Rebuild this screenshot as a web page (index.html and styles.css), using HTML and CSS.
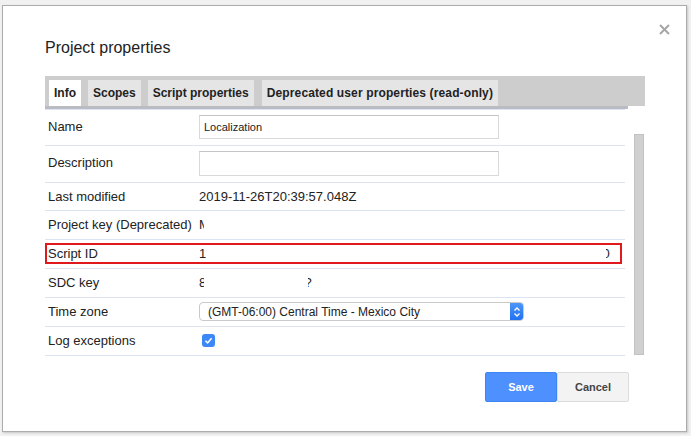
FILE: index.html
```html
<!DOCTYPE html>
<html>
<head>
<meta charset="utf-8">
<title>Project properties</title>
<link rel="stylesheet" href="styles.css">
</head>
<body>
<div class="dialog">
  <div class="close" aria-label="Close">
    <svg width="11" height="11" viewBox="0 0 11 11"><path d="M1 1 L10 10 M10 1 L1 10" stroke="#a6a6a6" stroke-width="2" fill="none"/></svg>
  </div>
  <h1 class="title">Project properties</h1>
  <div class="tabs">
    <span class="tab active">Info</span>
    <span class="tab">Scopes</span>
    <span class="tab">Script properties</span>
    <span class="tab tab-wide">Deprecated user properties (read-only)</span>
  </div>
  <div class="panel">
    <div class="table">
      <div class="row row-name">
        <div class="label">Name</div>
        <div class="value"><div class="input">Localization</div></div>
      </div>
      <div class="row row-desc">
        <div class="label label-up">Description</div>
        <div class="value"><div class="input input-desc"></div></div>
      </div>
      <div class="row row-short">
        <div class="label">Last modified</div>
        <div class="value">2019-11-26T20:39:57.048Z</div>
      </div>
      <div class="row">
        <div class="label">Project key (Deprecated)</div>
        <div class="value"><span class="frag"><span>M</span></span></div>
      </div>
      <div class="row">
        <div class="box">
          <div class="label label-box">Script ID</div>
          <div class="value value-split"><span>1</span><span class="frag frag-right"><span>0</span></span></div>
        </div>
      </div>
      <div class="row">
        <div class="label">SDC key</div>
        <div class="value value-sdc"><span class="frag"><span>8</span></span><span class="frag frag-right"><span>?</span></span></div>
      </div>
      <div class="row">
        <div class="label">Time zone</div>
        <div class="value">
          <div class="select">
            <span class="select-text">(GMT-06:00) Central Time - Mexico City</span>
            <span class="select-arrow">
              <svg width="8" height="12" viewBox="0 0 8 12"><path d="M1.5 4.5 L4 2 L6.5 4.5 M1.5 7.5 L4 10 L6.5 7.5" stroke="#fff" stroke-width="1.3" fill="none"/></svg>
            </span>
          </div>
        </div>
      </div>
      <div class="row">
        <div class="label">Log exceptions</div>
        <div class="value">
          <span class="checkbox">
            <svg width="13" height="13" viewBox="0 0 13 13"><path d="M3.5 6.8 L5.6 8.9 L9.6 4.3" stroke="#fff" stroke-width="1.6" fill="none"/></svg>
          </span>
        </div>
      </div>
    </div>
    <div class="scrollbar"></div>
  </div>
  <div class="footer">
    <button class="btn btn-save">Save</button>
    <button class="btn btn-cancel">Cancel</button>
  </div>
</div>
</body>
</html>
```
FILE: styles.css
```css
html, body {
  margin: 0;
  padding: 0;
}
body {
  background: #f1f1f1;
  font-family: "Liberation Sans", Arial, sans-serif;
  color: #222;
  width: 691px;
  height: 436px;
  overflow: hidden;
}
.dialog {
  position: relative;
  box-sizing: border-box;
  margin: 5px 0 0 2px;
  width: 685px;
  height: 427px;
  background: #fff;
  border: 1px solid #acacac;
  box-shadow: 1px 1px 2px rgba(0,0,0,0.18);
  padding: 32px 0 0 42px;
}
.close {
  position: absolute;
  top: 18px;
  right: 16px;
  width: 11px;
  height: 11px;
  line-height: 0;
}
.title {
  margin: 0;
  font-size: 16px;
  line-height: 20px;
  font-weight: normal;
  color: #222;
}
.tabs {
  margin-top: 18px;
  box-sizing: border-box;
  width: 600px;
  height: 30px;
  background: #cdcdcd;
  padding: 4px 4px 0;
  display: flex;
  gap: 7px;
}
.tab {
  height: 26px;
  line-height: 27px;
  padding: 0 5px;
  background: #e5e5e5;
  font-size: 12px;
  font-weight: bold;
  color: #222;
  white-space: nowrap;
}
.tab-wide {
  margin-left: 1px;
  letter-spacing: 0.13px;
}
.tab.active {
  background: #fff;
}
.panel {
  display: flex;
  align-items: flex-start;
  width: 600px;
}
.table {
  width: 583px;
  border-top: 3px solid #b9bcc3;
}
.row {
  box-sizing: border-box;
  width: 580px;
  height: 29px;
  padding-bottom: 1px;
  display: flex;
  align-items: center;
  border-bottom: 1px solid #dbe4f2;
  font-size: 13px;
}
.row-name {
  border-top: 1px solid #dbe4f2;
  height: 37px;
  padding-bottom: 2px;
}
.row-desc {
  height: 37px;
}
.row-short {
  height: 28px;
}
.label {
  box-sizing: border-box;
  width: 154px;
  padding-left: 3px;
  flex: none;
  white-space: nowrap;
}
.label-up {
  margin-bottom: 3px;
}
.value {
  flex: 1;
  display: flex;
  align-items: center;
  white-space: nowrap;
}
.input {
  box-sizing: border-box;
  width: 300px;
  height: 24px;
  border: 1px solid #d9d9d9;
  border-top-color: #c4c4c4;
  padding: 0 4px;
  font-size: 11px;
  line-height: 22px;
  color: #222;
}
.input-desc {
  height: 25px;
}
.box {
  box-sizing: border-box;
  width: 577px;
  height: 21px;
  border: 2px solid #e0191d;
  display: flex;
  align-items: center;
}
.label-box {
  width: 152px;
  padding-left: 1px;
}
.value-split {
  justify-content: space-between;
  padding-right: 10px;
}
.value-sdc {
  gap: 104px;
}
.frag {
  display: inline-block;
  width: 5px;
  overflow: hidden;
  vertical-align: bottom;
}
.frag > span {
  display: inline-block;
}
.frag-right {
  width: 4px;
}
.frag-right > span {
  margin-left: -3.5px;
}
.select {
  box-sizing: border-box;
  width: 325px;
  height: 19px;
  border: 1px solid #c9c9c9;
  border-radius: 4px;
  display: flex;
  align-items: center;
  overflow: hidden;
}
.select-text {
  flex: 1;
  padding-left: 8px;
  font-size: 12px;
  color: #222;
}
.select-arrow {
  width: 14px;
  height: 19px;
  margin-right: -1px;
  background: linear-gradient(#4f98f9, #1f6ff1);
  border-radius: 0 4px 4px 0;
  display: flex;
  align-items: center;
  justify-content: center;
}
.checkbox {
  margin-left: 3px;
  width: 13px;
  height: 13px;
  border-radius: 3px;
  background: #3c88f6;
  line-height: 0;
}
.scrollbar {
  margin-left: 6px;
  margin-top: 28px;
  box-sizing: border-box;
  width: 10px;
  height: 221px;
  background: #d0d0d0;
  border: 1px solid #c2c2c2;
}
.footer {
  width: 584px;
  margin-top: 16px;
  display: flex;
  justify-content: flex-end;
}
.btn {
  box-sizing: border-box;
  width: 72px;
  height: 30px;
  font-family: "Liberation Sans", Arial, sans-serif;
  font-size: 11px;
  font-weight: bold;
  border-radius: 2px;
  padding: 0;
  margin: 0;
}
.btn-save {
  background: #4d90fe;
  border: 1px solid #3f86f5;
  color: #fff;
}
.btn-cancel {
  background: #f3f3f3;
  border: 1px solid #dcdcdc;
  color: #444;
}
```
